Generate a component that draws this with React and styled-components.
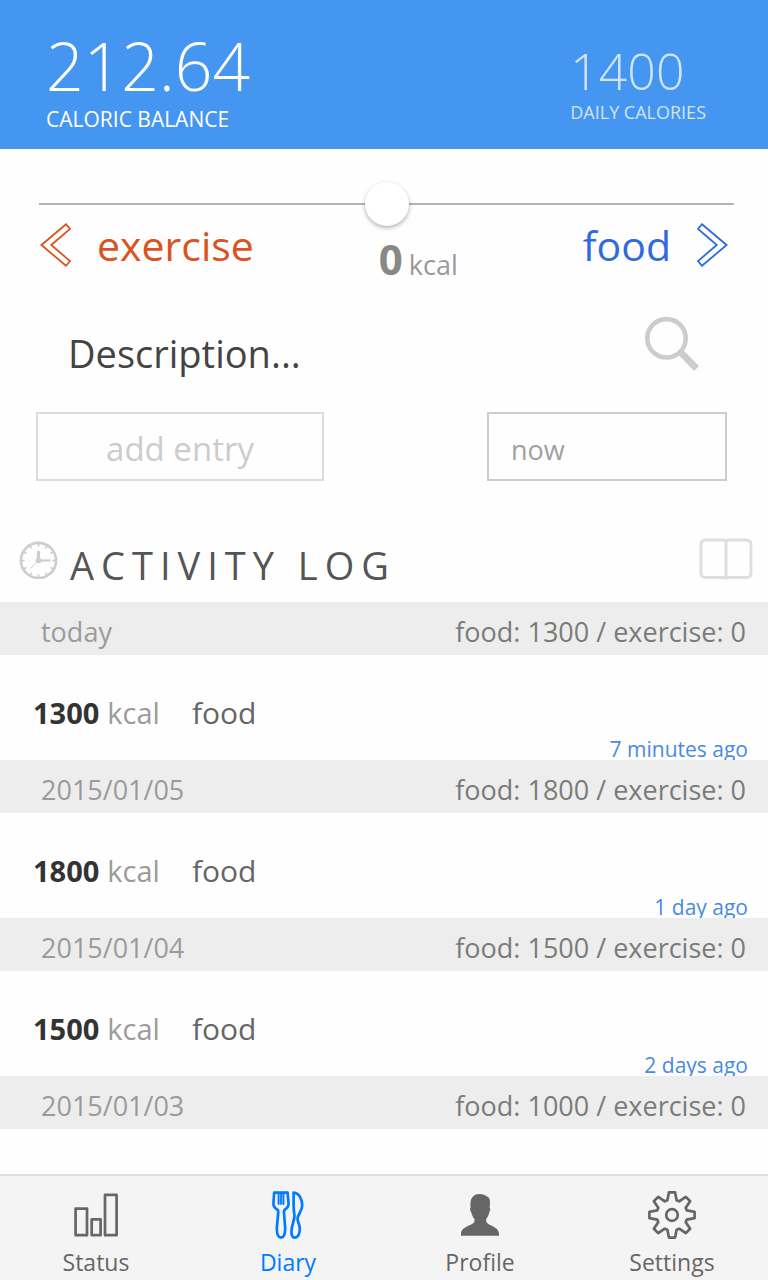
import React, { useState } from "react";
import styled, { createGlobalStyle } from "styled-components";

const GlobalStyle = createGlobalStyle`
  *, *::before, *::after { box-sizing: border-box; }
  body { margin: 0; background: #fefefe; }
  body, button, input {
    font-family: "Open Sans", "Noto Sans", sans-serif;
    font-weight: 400;
  }
  h2, p, ul { margin: 0; padding: 0; }
`;

const Screen = styled.div`
  display: flex;
  flex-direction: column;
  min-height: 100vh;
  background: #fefefe;
`;

const Header = styled.header`
  display: flex;
  justify-content: space-between;
  align-items: flex-start;
  padding: 26px 62px 15px 46px;
  background: #4596f0;
  color: #fff;
`;

const Stat = styled.div`
  padding-top: ${(p) => (p.$dim ? 19 : 0)}px;
  opacity: ${(p) => (p.$dim ? 0.75 : 1)};
`;

const StatValue = styled.p`
  font-size: ${(p) => p.$size}px;
  line-height: ${(p) => p.$line}px;
  font-weight: 300;
`;

const StatLabel = styled.p`
  font-size: ${(p) => p.$size}px;
  line-height: 30px;
`;

const Main = styled.main`
  flex: 1;
`;

const Slider = styled.input`
  display: block;
  appearance: none;
  width: calc(100% - 73px);
  height: 44px;
  margin: 33px 34px 0 39px;
  background: linear-gradient(#b4b4b4, #b4b4b4) center / 100% 2px no-repeat;

  &::-webkit-slider-thumb {
    appearance: none;
    width: 44px;
    height: 44px;
    border-radius: 50%;
    background: #fff;
    box-shadow: 0 2px 4px rgba(0, 0, 0, 0.3);
  }
`;

const ModeRow = styled.div`
  display: flex;
  justify-content: space-between;
  align-items: flex-start;
  height: 75px;
  margin-top: -5px;
  padding: 0 40px;
`;

const ModeButton = styled.button`
  display: flex;
  align-items: center;
  gap: 26px;
  padding: 0;
  border: 0;
  background: none;
  color: ${(p) => p.$color};
  font-size: 41px;
  line-height: 48px;
`;

const Amount = styled.output`
  display: flex;
  align-items: baseline;
  gap: 6px;
  color: #999;
  font-size: 27px;
  line-height: 76px;
`;

const AmountValue = styled.strong`
  color: #888;
  font-size: 42px;
  font-weight: 700;
`;

const DescriptionRow = styled.div`
  display: flex;
  align-items: flex-start;
  padding: 20px 68px 22px;
`;

const DescriptionInput = styled.input`
  flex: 1;
  min-width: 0;
  height: 74px;
  padding: 0;
  border: 0;
  outline: 0;
  background: none;
  color: #444;
  font-size: 38px;

  &::placeholder { color: #444; opacity: 1; }
`;

const IconButton = styled.button`
  display: flex;
  padding: 0;
  border: 0;
  background: none;
  color: ${(p) => p.$color};
`;

const EntryRow = styled.div`
  display: flex;
  justify-content: space-between;
  padding: 0 41px 0 36px;
`;

const AddButton = styled.button`
  width: 288px;
  height: 69px;
  padding: 4px 0 0;
  border: 2px solid #dcdcdc;
  background: none;
  color: #ccc;
  font-size: 33px;
`;

const TimeInput = styled.input`
  width: 240px;
  height: 69px;
  padding: 6px 22px 0;
  border: 2px solid #ccc;
  outline: 0;
  background: none;
  color: #a0a0a0;
  font-size: 27px;
`;

const LogHeader = styled.div`
  display: flex;
  align-items: center;
  height: 79px;
  margin: 39px 0 3px;
  padding: 0 15px 0 19px;
`;

const LogTitle = styled.h2`
  flex: 1;
  padding: 10px 0 0 12px;
  color: #555;
  font-size: 38px;
  font-weight: 400;
  line-height: 48px;
  letter-spacing: 7px;
`;

const List = styled.ul`
  list-style: none;
`;

const DayBar = styled.div`
  display: flex;
  justify-content: space-between;
  height: 53px;
  padding: 7px 22px 0 41px;
  background: #ededed;
  font-size: 27px;
  line-height: 46px;
`;

const Day = styled.span`
  color: #9b9b9b;
`;

const Totals = styled.span`
  color: #7b7b7b;
`;

const Entry = styled.div`
  height: 105px;
  overflow: hidden;
  padding: 38px 20px 0 33px;
`;

const EntryLine = styled.div`
  display: flex;
  align-items: baseline;
  line-height: 40px;
`;

const Calories = styled.strong`
  color: #333;
  font-size: 29px;
  font-weight: 700;
`;

const Unit = styled.span`
  margin: 0 32px 0 8px;
  color: #9b9b9b;
  font-size: 29px;
`;

const EntryName = styled.span`
  color: #666;
  font-size: 30px;
`;

const Ago = styled.p`
  color: #4a8be0;
  font-size: 21px;
  line-height: 32px;
  text-align: right;
`;

const TabBar = styled.nav`
  display: grid;
  grid-template-columns: repeat(4, 1fr);
  height: 106px;
  padding-top: 15px;
  border-top: 2px solid #dedede;
  background: #f4f4f4;
`;

const Tab = styled.a`
  display: flex;
  flex-direction: column;
  align-items: center;
  gap: 8px;
  color: ${(p) => (p.$active ? "#007aff" : "#666")};
  font-size: 23px;
  line-height: 30px;
  text-decoration: none;
`;

const Chevron = ({ right }) => (
  <svg width="31" height="44" viewBox="0 0 31 44" fill="none" stroke="currentColor" strokeWidth="1.8">
    <path d={right ? "M29.6 22 5 1.2 1 6 19.8 22 1 38 5 42.8Z" : "M1.4 22 26 1.2 30 6 11.2 22 30 38 26 42.8Z"} />
  </svg>
);

const SearchIcon = () => (
  <svg width="55" height="55" viewBox="0 0 55 55" fill="none" stroke="currentColor">
    <circle cx="21.5" cy="22.3" r="19.2" strokeWidth="4.6" />
    <path d="M34.5 36 38.5 40" strokeWidth="5" />
    <path d="M36.5 37.2 51.6 52.5" strokeWidth="6.8" />
  </svg>
);

const ClockIcon = () => (
  <svg width="39" height="39" viewBox="0 0 39 39" fill="none" stroke="#cdcdcd">
    <circle cx="19.5" cy="20.5" r="17.6" strokeWidth="2.6" />
    {Array.from({ length: 12 }, (_, i) => (
      <path key={i} d="M19.5 3.5V6.6" strokeWidth="1.6" transform={`rotate(${i * 30} 19.5 20.5)`} />
    ))}
    <path d="M19.5 20.5V11" strokeWidth="3" />
    <path d="M19.5 20.5H31.5" strokeWidth="2" />
    <path d="M19.5 20.5 11.5 28.5" strokeWidth="1" />
    <circle cx="19.5" cy="20.5" r="2.8" fill="#cdcdcd" stroke="none" />
  </svg>
);

const BookIcon = () => (
  <svg width="54" height="43" viewBox="0 0 54 43" fill="none" stroke="currentColor" strokeWidth="2.8">
    <path d="M27 3.2Q26 2 24.5 2H6.5Q2 2 2 6.5V35Q2 39.5 6.5 39.5H47.5Q52 39.5 52 35V6.5Q52 2 47.5 2H29.5Q28 2 27 3.2V41.5" />
  </svg>
);

const StatusIcon = () => (
  <svg width="48" height="48" viewBox="0 0 48 48" fill="none" stroke="currentColor" strokeWidth="2.7" strokeLinejoin="round">
    <path d="M3.6 17.6H15V44.2H3.6ZM19.7 28.4H28.6V44.2H19.7ZM33 3.9H44.6V44.2H33Z" />
  </svg>
);

const DiaryIcon = () => (
  <svg width="48" height="48" viewBox="0 0 48 48" fill="none" stroke="currentColor" strokeWidth="2.7" strokeLinejoin="round" strokeLinecap="round">
    <path d="M10.2 1.6H23.6L24.6 13Q24.6 16.4 20.4 19Q19.8 19.8 20 22L21.2 37Q21.2 46.6 17 46.6Q12.8 46.6 12.8 37L14.2 22Q14.4 19.800 13.8 19Q9.4 16.400 9.400 13Z" />
    <path d="M14.6 2V13M19.4 2V13" strokeWidth="2" />
    <path d="M17 2V13" strokeWidth="1.8" />
    <path d="M29.6 1.6C35.4 2 38.400 9 38.200 14.500C38 20 33.900 23.500 33.500 27.500C33.400 31 36 34 35.800 38C35.600 43.300 33.800 46.600 30.900 46.600C28 46.600 27.200 43.300 27.500 39.500C27.800 33.500 30.800 29 30.400 24.500C30 21 29.600 18 29.600 14Z" />
  </svg>
);

const ProfileIcon = () => (
  <svg width="48" height="48" viewBox="0 0 48 48" fill="currentColor">
    <path d="M23.500 3C27 3 29.500 4 30.500 5.300C34.300 6 34.300 10 33.700 16.500C34.600 17.200 34.200 20.600 33.300 21.300C32.800 24 31.500 26.500 30.200 28V30.500C31.500 35 43 34.800 43 43.200V44.700H5V43.200C5 34.800 17 35 18.500 30.500V28C17 26.500 15.700 24 15.300 21.300C14.200 20.600 13.700 17.200 14.600 16.500C13.500 7.500 17 3 23.500 3Z" />
  </svg>
);

const gearPoints = Array.from({ length: 8 }, (_, i) => {
  const angle = (i * Math.PI) / 4;
  return [[-4.6, -14.8], [-3.1, -22.6], [3.1, -22.6], [4.6, -14.8]]
    .map(([x, y]) => {
      const px = 24 + x * Math.cos(angle) - y * Math.sin(angle);
      const py = 24 + x * Math.sin(angle) + y * Math.cos(angle);
      return `${px.toFixed(2)},${py.toFixed(2)}`;
    })
    .join(" ");
}).join(" ");

const SettingsIcon = () => (
  <svg width="48" height="48" viewBox="0 0 48 48" fill="none" stroke="currentColor" strokeWidth="2.7" strokeLinejoin="round">
    <polygon points={gearPoints} />
    <circle cx="24" cy="24" r="5.8" />
  </svg>
);

const days = [
  { day: "today", food: 1300, ago: "7 minutes ago" },
  { day: "2015/01/05", food: 1800, ago: "1 day ago" },
  { day: "2015/01/04", food: 1500, ago: "2 days ago" },
  { day: "2015/01/03", food: 1000 },
];

const tabs = [
  { label: "Status", Icon: StatusIcon },
  { label: "Diary", Icon: DiaryIcon, active: true },
  { label: "Profile", Icon: ProfileIcon },
  { label: "Settings", Icon: SettingsIcon },
];

export default function App() {
  const [amount, setAmount] = useState(0);

  return (
    <Screen>
      <GlobalStyle />
      <Header>
        <Stat>
          <StatValue $size={66} $line={78}>212.64</StatValue>
          <StatLabel $size={21}>CALORIC BALANCE</StatLabel>
        </Stat>
        <Stat $dim>
          <StatValue $size={50} $line={52}>1400</StatValue>
          <StatLabel $size={18}>DAILY CALORIES</StatLabel>
        </Stat>
      </Header>
      <Main>
        <Slider
          type="range"
          aria-label="Calories"
          min={-1000}
          max={1000}
          value={amount}
          onChange={(e) => setAmount(Number(e.target.value))}
        />
        <ModeRow>
          <ModeButton type="button" $color="#d9541e">
            <Chevron />
            exercise
          </ModeButton>
          <Amount>
            <AmountValue>{amount}</AmountValue>
            kcal
          </Amount>
          <ModeButton type="button" $color="#2f6ade">
            food
            <Chevron right />
          </ModeButton>
        </ModeRow>
        <DescriptionRow>
          <DescriptionInput aria-label="Description" placeholder="Description..." />
          <IconButton type="button" aria-label="Search" $color="#ccc">
            <SearchIcon />
          </IconButton>
        </DescriptionRow>
        <EntryRow>
          <AddButton type="button">add entry</AddButton>
          <TimeInput aria-label="Time" defaultValue="now" />
        </EntryRow>
        <LogHeader>
          <ClockIcon />
          <LogTitle>ACTIVITY LOG</LogTitle>
          <IconButton type="button" aria-label="Open diary" $color="#dedede">
            <BookIcon />
          </IconButton>
        </LogHeader>
        <List>
          {days.map(({ day, food, ago }) => (
            <li key={day}>
              <DayBar>
                <Day>{day}</Day>
                <Totals>food: {food} / exercise: 0</Totals>
              </DayBar>
              {ago && (
                <Entry>
                  <EntryLine>
                    <Calories>{food}</Calories>
                    <Unit>kcal</Unit>
                    <EntryName>food</EntryName>
                  </EntryLine>
                  <Ago>{ago}</Ago>
                </Entry>
              )}
            </li>
          ))}
        </List>
      </Main>
      <TabBar>
        {tabs.map(({ label, Icon, active }) => (
          <Tab key={label} href={`#${label.toLowerCase()}`} $active={active}>
            <Icon />
            {label}
          </Tab>
        ))}
      </TabBar>
    </Screen>
  );
}
